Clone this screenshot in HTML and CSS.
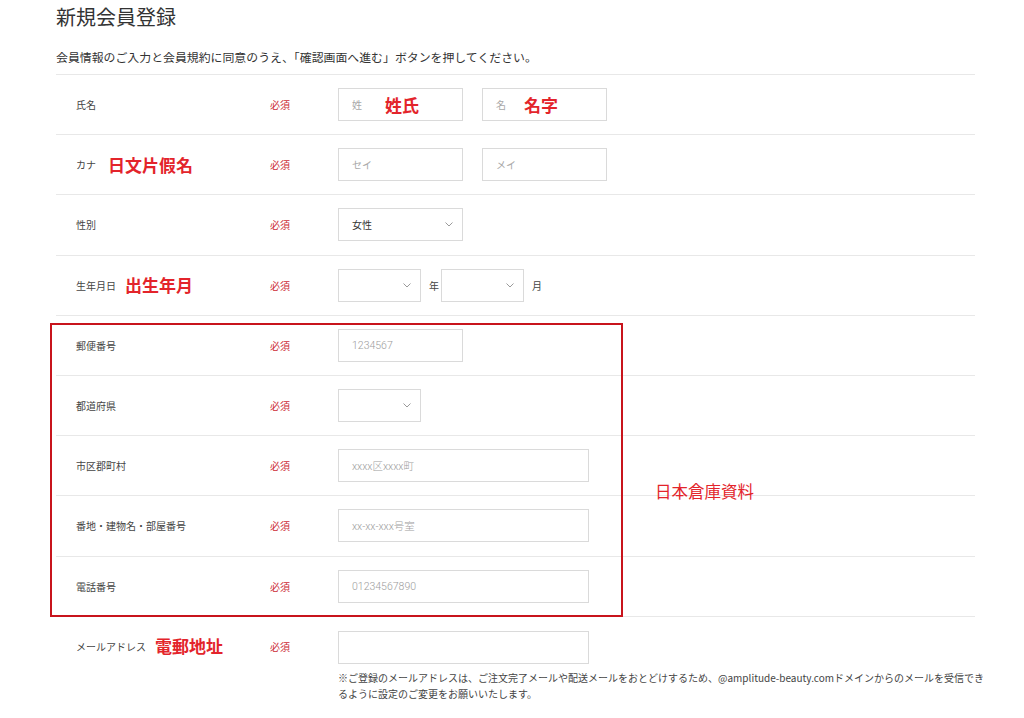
FILE: index.html
```html
<!DOCTYPE html>
<html lang="ja">
<head>
<meta charset="utf-8">
<title>新規会員登録</title>
<link rel="stylesheet" href="styles.css">
</head>
<body>
<div class="page">
  <h1 class="title">新規会員登録</h1>
  <p class="lead">会員情報のご入力と会員規約に同意のうえ、「確認画面へ進む」ボタンを押してください。</p>

  <div class="form">
    <div class="row">
      <div class="label">氏名</div>
      <div class="req">必須</div>
      <div class="field">
        <div class="box w125"><span class="ph">姓</span><span class="anno in-box">姓氏</span></div>
        <div class="box w125 gap-left"><span class="ph">名</span><span class="anno in-box">名字</span></div>
      </div>
    </div>

    <div class="row">
      <div class="label">カナ<span class="anno wide">日文片假名</span></div>
      <div class="req">必須</div>
      <div class="field">
        <div class="box w125"><span class="ph">セイ</span></div>
        <div class="box w125 gap-left"><span class="ph">メイ</span></div>
      </div>
    </div>

    <div class="row">
      <div class="label">性別</div>
      <div class="req">必須</div>
      <div class="field">
        <div class="box select w125"><span class="val">女性</span>
          <svg class="chev" width="8" height="5" viewBox="0 0 8 5"><path d="M0.5 0.5 L4 4 L7.5 0.5" fill="none" stroke="#9a9a9a" stroke-width="1"/></svg>
        </div>
      </div>
    </div>

    <div class="row">
      <div class="label">生年月日<span class="anno">出生年月</span></div>
      <div class="req">必須</div>
      <div class="field">
        <div class="box select w83">
          <svg class="chev" width="8" height="5" viewBox="0 0 8 5"><path d="M0.5 0.5 L4 4 L7.5 0.5" fill="none" stroke="#9a9a9a" stroke-width="1"/></svg>
        </div>
        <span class="unit">年</span>
        <div class="box select w83">
          <svg class="chev" width="8" height="5" viewBox="0 0 8 5"><path d="M0.5 0.5 L4 4 L7.5 0.5" fill="none" stroke="#9a9a9a" stroke-width="1"/></svg>
        </div>
        <span class="unit">月</span>
      </div>
    </div>

    <div class="row">
      <div class="label">郵便番号</div>
      <div class="req">必須</div>
      <div class="field">
        <div class="box w125"><span class="ph num">1234567</span></div>
      </div>
    </div>

    <div class="row">
      <div class="label">都道府県</div>
      <div class="req">必須</div>
      <div class="field">
        <div class="box select w83">
          <svg class="chev" width="8" height="5" viewBox="0 0 8 5"><path d="M0.5 0.5 L4 4 L7.5 0.5" fill="none" stroke="#9a9a9a" stroke-width="1"/></svg>
        </div>
      </div>
    </div>

    <div class="row">
      <div class="label">市区郡町村</div>
      <div class="req">必須</div>
      <div class="field">
        <div class="box w251"><span class="ph num">xxxx区xxxx町</span></div>
      </div>
    </div>

    <div class="row">
      <div class="label">番地・建物名・部屋番号</div>
      <div class="req">必須</div>
      <div class="field">
        <div class="box w251"><span class="ph num">xx-xx-xxx号室</span></div>
      </div>
    </div>

    <div class="row">
      <div class="label">電話番号</div>
      <div class="req">必須</div>
      <div class="field">
        <div class="box w251"><span class="ph num">01234567890</span></div>
      </div>
    </div>

    <div class="row row-top">
      <div class="label">メールアドレス<span class="anno">電郵地址</span></div>
      <div class="req">必須</div>
      <div class="field col">
        <div class="box w251"></div>
        <p class="note">※ご登録のメールアドレスは、ご注文完了メールや配送メールをおとどけするため、@amplitude-beauty.comドメインからのメールを受信できるように設定のご変更をお願いいたします。</p>
      </div>
    </div>
  </div>

  <div class="redbox"></div>
  <div class="anno anno-side">日本倉庫資料</div>
</div>
</body>
</html>
```

FILE: styles.css
```css
* { box-sizing: border-box; }
html, body { margin: 0; padding: 0; background: #fff; }
body {
  font-family: "Noto Sans CJK JP", "Noto Sans", sans-serif;
  color: #333;
  overflow: hidden;
}
.page {
  position: relative;
  width: 1024px;
  height: 718px;
  padding-left: 56px;
}
.title {
  margin: 0;
  padding-top: 4px;
  font-size: 20px;
  line-height: 26px;
  font-weight: 400;
  color: #333;
}
.lead {
  margin: 19px 0 0;
  font-size: 11.9px;
  line-height: 16px;
  color: #333;
}
.form {
  width: 919px;
  margin-top: 9px;
  border-top: 1px solid #e8e8e8;
}
.row {
  display: flex;
  align-items: center;
  height: 60.2px;
  border-bottom: 1px solid #e8e8e8;
}
.row-top {
  align-items: flex-start;
  height: auto;
  border-bottom: none;
  padding-top: 14px;
}
.row-top .label, .row-top .req { height: 31px; display: flex; align-items: center; }
.label {
  flex: 0 0 214px;
  padding-left: 20px;
  font-size: 10px;
  color: #444;
  display: flex;
  align-items: center;
}
.req {
  flex: 0 0 68px;
  font-size: 10px;
  color: #cc2d37;
}
.field {
  display: flex;
  align-items: center;
}
.field.col {
  flex-direction: column;
  align-items: flex-start;
}
.box {
  position: relative;
  flex: 0 0 auto;
  height: 33px;
  border: 1px solid #dadada;
  background: #fff;
  display: flex;
  align-items: center;
  padding-left: 13px;
}
.w125 { width: 125px; }
.w83 { width: 83px; }
.w251 { width: 251px; }
.gap-left { margin-left: 19px; }
.ph {
  font-size: 10px;
  color: #a8a8a8;
}
.ph.num {
  font-family: "Roboto", "Noto Sans CJK JP", sans-serif;
  font-weight: 300;
  font-size: 10.5px;
  color: #9c9c9c;
}
.val {
  font-size: 10px;
  color: #333;
}
.select { padding-right: 9px; }
.chev { margin-left: auto; display: block; }
.unit {
  font-size: 10px;
  color: #444;
  margin: 0 2px 0 8px;
}
.unit:last-child { margin-left: 8px; }
.note {
  margin: 6px 0 0;
  width: 648px;
  font-size: 10px;
  line-height: 16px;
  color: #444;
}
.anno {
  font-size: 17px;
  font-weight: 700;
  color: #e3242b;
  margin-left: 9px;
  line-height: 20px;
}
.anno.wide { margin-left: 12px; }
.anno.in-box {
  position: absolute;
  left: 46px;
  top: 6px;
  margin: 0;
}
.box.gap-left .anno.in-box { left: 41px; }
.redbox {
  position: absolute;
  left: 50px;
  top: 323px;
  width: 573px;
  height: 294px;
  border: 2px solid #c8141c;
  pointer-events: none;
}
.anno-side {
  position: absolute;
  left: 655px;
  top: 481px;
  margin: 0;
  font-size: 16.5px;
  font-weight: 400;
}
```
